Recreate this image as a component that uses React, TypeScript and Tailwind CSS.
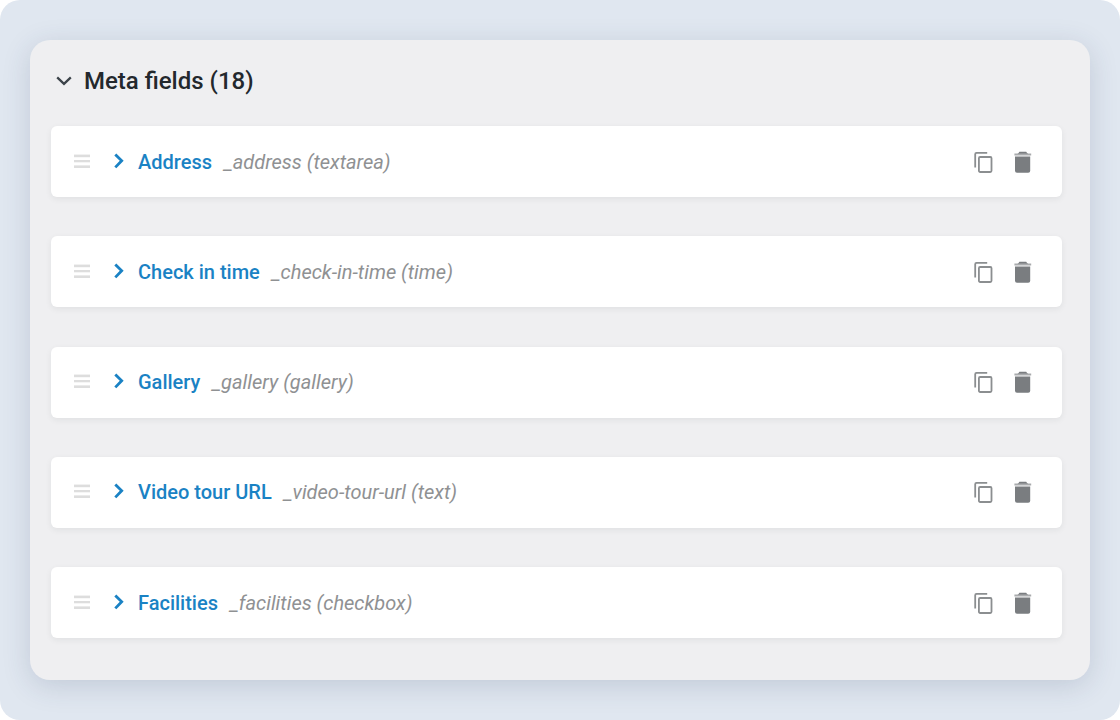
const fields = [
    { label: "Address", name: "_address", type: "textarea" },
    { label: "Check in time", name: "_check-in-time", type: "time" },
    { label: "Gallery", name: "_gallery", type: "gallery" },
    { label: "Video tour URL", name: "_video-tour-url", type: "text" },
    { label: "Facilities", name: "_facilities", type: "checkbox" },
];

function DragIcon() {
    return (
        <svg width="16" height="16" viewBox="0 0 16 16" fill="#dddddd" aria-hidden="true">
            <rect y="0.6" width="16" height="2.6" />
            <rect y="6" width="16" height="2.3" />
            <rect y="11.4" width="16" height="2.6" />
        </svg>
    );
}

function ChevronDown() {
    return (
        <svg width="16" height="10" viewBox="0 0 16 10" fill="none" aria-hidden="true">
            <path d="M1.2 1.4 8 7.8l6.8-6.4" stroke="#3c434a" strokeWidth="2.3" />
        </svg>
    );
}

function ChevronRight() {
    return (
        <svg width="10" height="18" viewBox="0 0 10 18" fill="none" aria-hidden="true">
            <path d="M1.3 1.4 7.7 7.8l-6.4 6.6" stroke="#1a82c4" strokeWidth="2.8" />
        </svg>
    );
}

function CopyIcon() {
    return (
        <svg width="20" height="22" viewBox="0 0 20 22" fill="none" stroke="#8b8e90" strokeWidth="1.8" aria-hidden="true">
            <path d="M1.2 16.6V3.2Q1.2 1.9 2.5 1.9H13.2" />
            <rect x="4.9" y="6" width="12.6" height="15" rx="1.2" />
        </svg>
    );
}

function TrashIcon() {
    return (
        <svg width="18" height="22" viewBox="0 0 18 22" aria-hidden="true">
            <path d="M4.2 2h9.4l0.6 0.4h3v2H0.4v-2h3z" fill="#a9abad" />
            <path d="M5.4 0.8h6.8l1.2 1.8H4.2z" fill="#7a7d80" />
            <path d="M1 5.4h15.2v14.4q0 2-2 2H3q-2 0-2-2z" fill="#7a7d80" />
        </svg>
    );
}

export default function App() {
    return (
        <div className="bg-white font-[Roboto,sans-serif]">
            <main className="flex min-h-screen flex-col rounded-[20px] bg-[#e0e7f0] px-[30px] py-10">
                <section className="flex flex-1 flex-col rounded-[20px] bg-[#efeff1] pt-[25px] pr-7 pb-[42px] pl-[21px] shadow-[0_6px_28px_rgba(40,60,95,0.17)]">
                    <h2 className="mb-[29px] pl-[5px]">
                        <button type="button" aria-expanded="true" className="flex items-center gap-3 text-2xl font-medium text-[#23282d]">
                            <ChevronDown />
                            Meta fields (18)
                        </button>
                    </h2>
                    <ul className="flex flex-1 flex-col justify-between gap-4">
                        {fields.map((field) => (
                            <li
                                key={field.name}
                                className="flex h-[71px] items-center rounded-md bg-white pr-[30px] pl-[23px] shadow-[0_2px_6px_rgba(35,40,45,0.07)]"
                            >
                                <button type="button" aria-label={`Move ${field.label}`} className="mr-6">
                                    <DragIcon />
                                </button>
                                <button type="button" aria-expanded="false" className="flex items-center gap-3 text-xl">
                                    <ChevronRight />
                                    <span className="flex items-center gap-3 pl-[2px]">
                                        <span className="font-medium text-[#1a82c4]">{field.label}</span>
                                        <span className="text-[#8f9193] italic">
                                            {field.name} ({field.type})
                                        </span>
                                    </span>
                                </button>
                                <div className="ml-auto flex items-center gap-5">
                                    <button type="button" aria-label={`Duplicate ${field.label}`}>
                                        <CopyIcon />
                                    </button>
                                    <button type="button" aria-label={`Delete ${field.label}`}>
                                        <TrashIcon />
                                    </button>
                                </div>
                            </li>
                        ))}
                    </ul>
                </section>
            </main>
        </div>
    );
}
